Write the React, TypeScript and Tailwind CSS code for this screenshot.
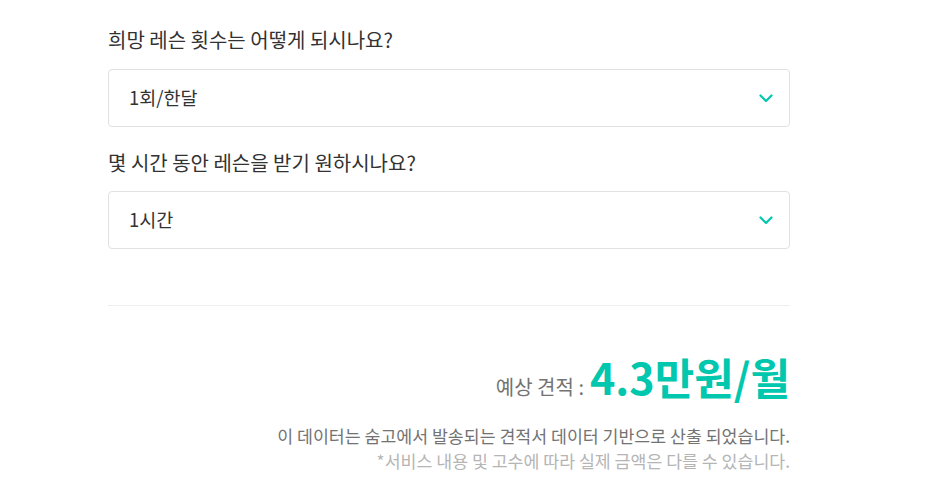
import React from "react";

const font = { fontFamily: '"Noto Sans CJK KR", "Noto Sans", sans-serif' };

function Chevron() {
  return (
    <svg width="14" height="9" viewBox="0 0 14 9" fill="none">
      <path d="M1.5 1.5 L7 7 L12.5 1.5" stroke="#00c7ae" strokeWidth="2.2" strokeLinecap="round" strokeLinejoin="round" />
    </svg>
  );
}

function Select({ value }: { value: string }) {
  return (
    <div className="flex h-[58px] items-center justify-between rounded-[4px] border border-[#e1e1e1] bg-white pl-[20px] pr-[16px]">
      <span className="text-[18.5px] text-[#323232]">{value}</span>
      <Chevron />
    </div>
  );
}

export default function App() {
  return (
    <div className="min-h-[498px] w-[936px] bg-white" style={font}>
      <div className="ml-[108px] w-[682px] pt-[26px]">
        <div className="text-[20px] leading-[27px] text-[#323232]">희망 레슨 횟수는 어떻게 되시나요?</div>
        <div className="mt-[16px]">
          <Select value="1회/한달" />
        </div>
        <div className="mt-[22px] text-[20px] leading-[27px] text-[#323232]">몇 시간 동안 레슨을 받기 원하시나요?</div>
        <div className="mt-[15px]">
          <Select value="1시간" />
        </div>
        <div className="mt-[56px] h-px bg-[#eeeeee]" />
        <div className="mt-[40px] flex items-baseline justify-end">
          <span className="text-[20px] text-[#737373]">예상 견적 :</span>
          <span className="ml-[6px] text-[43px] font-bold leading-[60px] text-[#00c7ae]">4.3만원/월</span>
        </div>
        <div className="mt-[17px] text-right text-[17.3px] leading-[25px] text-[#737373]">
          이 데이터는 숨고에서 발송되는 견적서 데이터 기반으로 산출 되었습니다.
        </div>
        <div className="text-right text-[17.3px] leading-[25px] text-[#b5b5b5]">
          *서비스 내용 및 고수에 따라 실제 금액은 다를 수 있습니다.
        </div>
      </div>
    </div>
  );
}
